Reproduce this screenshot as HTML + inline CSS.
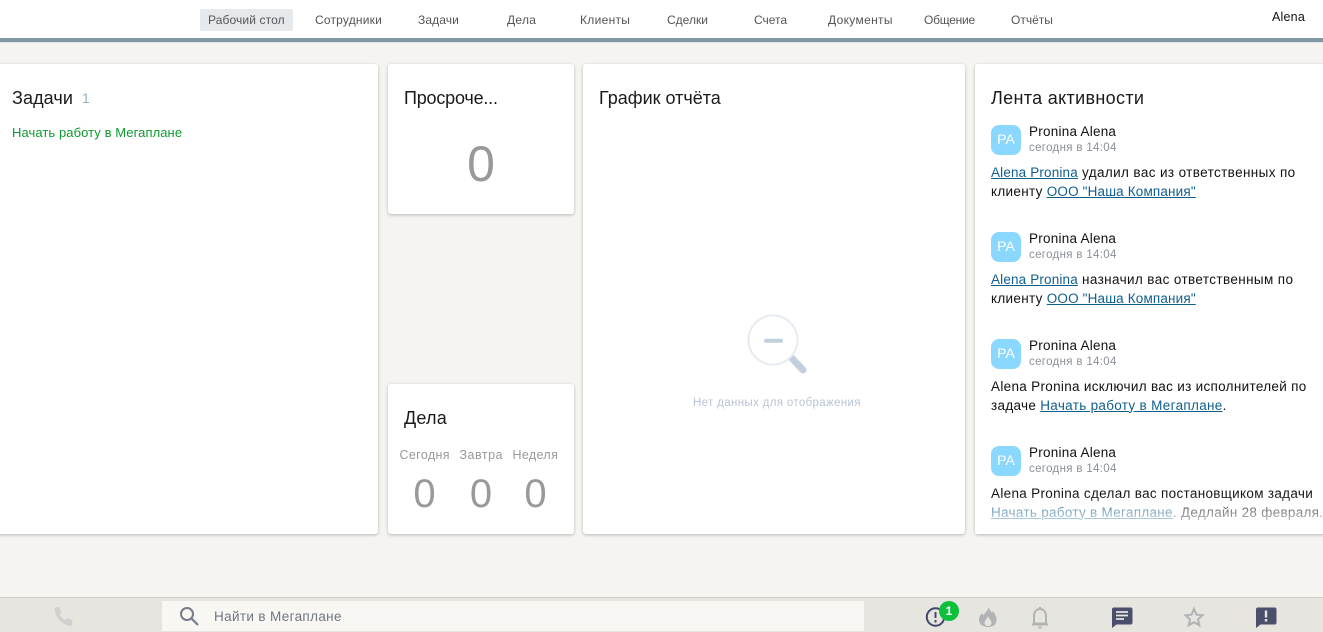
<!DOCTYPE html>
<html lang="ru"><head><meta charset="utf-8"><title>Рабочий стол</title>
<style>
html,body{margin:0;padding:0}
body{width:1323px;height:632px;overflow:hidden;position:relative;background:#f5f4f0;font-family:"Liberation Sans",sans-serif;color:#111}
.t{position:absolute;white-space:nowrap;line-height:1}
.nav{font-size:12px;color:#555;top:13.5px;letter-spacing:.12px}
.card{position:absolute;background:#fff;border-radius:3px;box-shadow:0 1px 3px rgba(0,0,0,.25)}
.h{font-size:18px;color:#1a1a1a}
a{color:#0f5e8e;text-decoration:underline}
a.s{letter-spacing:.16px}
.av{position:absolute;left:991px;width:30px;height:30px;background:#8ad8ff;border-radius:8px;color:#fff;font-size:14px;line-height:28px;text-align:center}
.n{font-size:13.5px;color:#111;left:1029px;letter-spacing:.24px}
.d{font-size:11.5px;color:#8a9099;left:1029px;letter-spacing:.33px}
.m{font-size:13.5px;color:#111;left:991px;letter-spacing:.31px}
.w{letter-spacing:.38px}
.num{color:#999;text-align:center}
.lab{font-size:12.5px;color:#999;letter-spacing:.35px}
svg{position:absolute;display:block}
</style></head><body>
<div style="position:absolute;left:0;top:0;width:1323px;height:38px;background:#fff"></div>
<div style="position:absolute;left:0;top:38px;width:1323px;height:4px;background:#7f98a4"></div>
<div style="position:absolute;left:0;top:42px;width:1323px;height:1px;background:#e4e3df"></div>
<div style="position:absolute;left:200px;top:9px;width:93px;height:22px;background:#e6e9ec;border-radius:2px"></div>
<div class="t nav" style="left:208px">Рабочий стол</div>
<div class="t nav" style="left:315px;letter-spacing:.2px">Сотрудники</div>
<div class="t nav" style="left:418px;letter-spacing:.1px">Задачи</div>
<div class="t nav" style="left:507px;letter-spacing:.3px">Дела</div>
<div class="t nav" style="left:580px;letter-spacing:.3px">Клиенты</div>
<div class="t nav" style="left:667px;letter-spacing:0">Сделки</div>
<div class="t nav" style="left:754px;letter-spacing:0">Счета</div>
<div class="t nav" style="left:828px;letter-spacing:.33px">Документы</div>
<div class="t nav" style="left:924px;letter-spacing:-.25px">Общение</div>
<div class="t nav" style="left:1011px;letter-spacing:0">Отчёты</div>
<div class="t" style="left:1272px;top:11px;font-size:12.5px;color:#111;letter-spacing:.2px">Alena</div>

<div class="card" style="left:-5px;top:64px;width:383px;height:470px"></div>
<div class="t h" style="left:12px;top:89px;letter-spacing:.1px">Задачи</div>
<div class="t" style="left:82px;top:91px;font-size:14px;color:#8fb0c0">1</div>
<div class="t" style="left:12px;top:126px;font-size:13px;color:#0c9a2e;letter-spacing:.08px">Начать работу в Мегаплане</div>

<div class="card" style="left:388px;top:64px;width:186px;height:150px"></div>
<div class="t h" style="left:404px;top:89px;letter-spacing:-.2px">Просроче...</div>
<div class="t num" style="left:388px;width:186px;top:139px;font-size:50px">0</div>

<div class="card" style="left:388px;top:384px;width:186px;height:150px"></div>
<div class="t h" style="left:404px;top:409px;letter-spacing:.2px">Дела</div>
<div class="t lab" style="left:399.5px;top:449px">Сегодня</div>
<div class="t lab" style="left:459.5px;top:449px;letter-spacing:.5px">Завтра</div>
<div class="t lab" style="left:512.5px;top:449px">Неделя</div>
<div class="t num" style="left:404.5px;width:40px;top:474px;font-size:40px">0</div>
<div class="t num" style="left:461px;width:40px;top:474px;font-size:40px">0</div>
<div class="t num" style="left:515.5px;width:40px;top:474px;font-size:40px">0</div>

<div class="card" style="left:583px;top:64px;width:382px;height:470px"></div>
<div class="t h" style="left:599px;top:89px">График отчёта</div>
<svg style="left:744px;top:312px" width="66" height="66" viewBox="0 0 66 66">
<path d="M44 42L59 58" stroke="#c2cfde" stroke-width="7" stroke-linecap="round"/>
<circle cx="29" cy="28" r="24.500" fill="#fff" stroke="#e6ebf1" stroke-width="2"/>
<path d="M22 28.700H37" stroke="#c2cfde" stroke-width="4" stroke-linecap="round"/>
</svg>
<div class="t" style="left:693px;top:398px;font-size:11.5px;color:#b9c5d4;letter-spacing:.35px">Нет данных для отображения</div>

<div class="card" style="left:975px;top:64px;width:360px;height:470px"></div>
<div class="t h" style="left:991px;top:89px;letter-spacing:.33px">Лента активности</div>

<div class="av" style="top:125px">PA</div>
<div class="t n" style="top:124.5px">Pronina Alena</div>
<div class="t d" style="top:142.5px">сегодня в 14:04</div>
<div class="t m w" style="top:165.5px"><a class="s" href="#">Alena Pronina</a> удалил вас из ответственных по</div>
<div class="t m" style="top:184.5px">клиенту <a class="s" href="#">ООО "Наша Компания"</a></div>

<div class="av" style="top:232px">PA</div>
<div class="t n" style="top:231.5px">Pronina Alena</div>
<div class="t d" style="top:249.5px">сегодня в 14:04</div>
<div class="t m w" style="top:272.5px"><a class="s" href="#">Alena Pronina</a> назначил вас ответственным по</div>
<div class="t m" style="top:291.5px">клиенту <a class="s" href="#">ООО "Наша Компания"</a></div>

<div class="av" style="top:339px">PA</div>
<div class="t n" style="top:338.5px">Pronina Alena</div>
<div class="t d" style="top:356.5px">сегодня в 14:04</div>
<div class="t m" style="top:379.5px">Alena Pronina исключил вас из исполнителей по</div>
<div class="t m" style="top:398.5px">задаче <a href="#">Начать работу в Мегаплане</a>.</div>

<div class="av" style="top:446px">PA</div>
<div class="t n" style="top:445.5px">Pronina Alena</div>
<div class="t d" style="top:463.5px">сегодня в 14:04</div>
<div class="t m" style="top:486.5px">Alena Pronina сделал вас постановщиком задачи</div>
<div class="t m" style="top:505.5px;letter-spacing:.29px"><a href="#">Начать работу в Мегаплане</a>. Дедлайн 28 февраля.</div>
<div style="position:absolute;left:975px;top:494px;width:348px;height:40px;background:linear-gradient(rgba(255,255,255,0),rgba(255,255,255,.65) 60%,rgba(255,255,255,.7))"></div>

<div style="position:absolute;left:0;top:597px;width:1323px;height:35px;background:#e7e5df;border-top:1px solid #cfcdc7;box-sizing:border-box"></div>
<div style="position:absolute;left:162px;top:601px;width:702px;height:30px;background:#f8f7f3"></div>
<svg style="left:52px;top:604px" width="24" height="24" viewBox="0 0 24 24"><path d="M3 3.500L7 3l2.500 5-2 2.500c1.200 2.500 3 4.300 5.500 5.500l2.500-2 5 2.500-.5 4.500c-.2.500-1 .800-2 .800C10.500 21 3 13.500 2.700 5c0-.700 0-1.200.300-1.500z" fill="#cfd0cf"/></svg>
<svg style="left:178px;top:605px" width="22" height="22" viewBox="0 0 22 22"><circle cx="9" cy="9" r="6" fill="none" stroke="#777b88" stroke-width="2"/><path d="M13.500 13.500L20 20" stroke="#777b88" stroke-width="2.200"/></svg>
<div class="t" style="left:214px;top:610px;font-size:13.5px;color:#6f7682;letter-spacing:.35px">Найти в Мегаплане</div>

<svg style="left:925px;top:606px" width="22" height="22" viewBox="0 0 22 22"><circle cx="10.500" cy="11" r="8.700" fill="none" stroke="#44496a" stroke-width="2"/><path d="M10.500 6V12M10.500 14v2.500" stroke="#44496a" stroke-width="2"/></svg>
<div style="position:absolute;left:939px;top:600.5px;width:20px;height:20px;border-radius:50%;background:#0cc03c;color:#fff;font-size:12px;font-weight:bold;line-height:20px;text-align:center">1</div>
<svg style="left:977px;top:605px" width="22" height="24" viewBox="0 0 22 24"><path d="M12 2c.5 3 2 4 3 6l1-2c2 3 3.500 5.500 3.500 9 0 4.500-3.500 7-8.500 7S2 19.500 2 15c0-3 1.500-5 3-7l1 2.500C8 8 10.500 6 12 2zM11 11c-.5 2.500-3.500 4.500-3.500 7 0 1.800 1.500 3 3.500 3s3.500-1.200 3.500-3c0-2.500-3-4.500-3.500-7z" fill="#b2b3b5" fill-rule="evenodd"/></svg>
<svg style="left:1029px;top:605px" width="22" height="24" viewBox="0 0 22 24"><path d="M5 18.500V11c0-4 2.500-7 6-7s6 3 6 7v7.500z" fill="none" stroke="#b2b3b5" stroke-width="2"/><path d="M3 19.500h16" stroke="#b2b3b5" stroke-width="2"/><path d="M11 2v2M9.500 22.500h3" stroke="#b2b3b5" stroke-width="2"/></svg>
<svg style="left:1111px;top:606.500px" width="22" height="22" viewBox="0 0 22 22"><path d="M2.500 0.500h17A2 2 0 0 1 21.500 2.500v13a2 2 0 0 1-2 2H5.500l-4.500 3.500V2.500A2 2 0 0 1 2.500 0.500z" fill="#4a4f6c"/><path d="M5 5h12M5 8.500h12M5 12h8" stroke="#e7e5df" stroke-width="1.800"/></svg>
<svg style="left:1183px;top:606px" width="22" height="22" viewBox="0 0 22 22"><path d="M11 3l2.500 5.700 6 .600-4.500 4 1.300 6L11 16.200 5.700 19.300l1.300-6-4.500-4 6-.600z" fill="none" stroke="#b2b3b5" stroke-width="2"/></svg>
<svg style="left:1255px;top:606.500px" width="22" height="22" viewBox="0 0 22 22"><path d="M2.500 0.500h17A2 2 0 0 1 21.500 2.500v13a2 2 0 0 1-2 2H5.500l-4.500 3.500V2.500A2 2 0 0 1 2.500 0.500z" fill="#4a4f6c"/><path d="M11 3.500V10.500M11 12V14.500" stroke="#e7e5df" stroke-width="2.400"/></svg>
</body></html>
